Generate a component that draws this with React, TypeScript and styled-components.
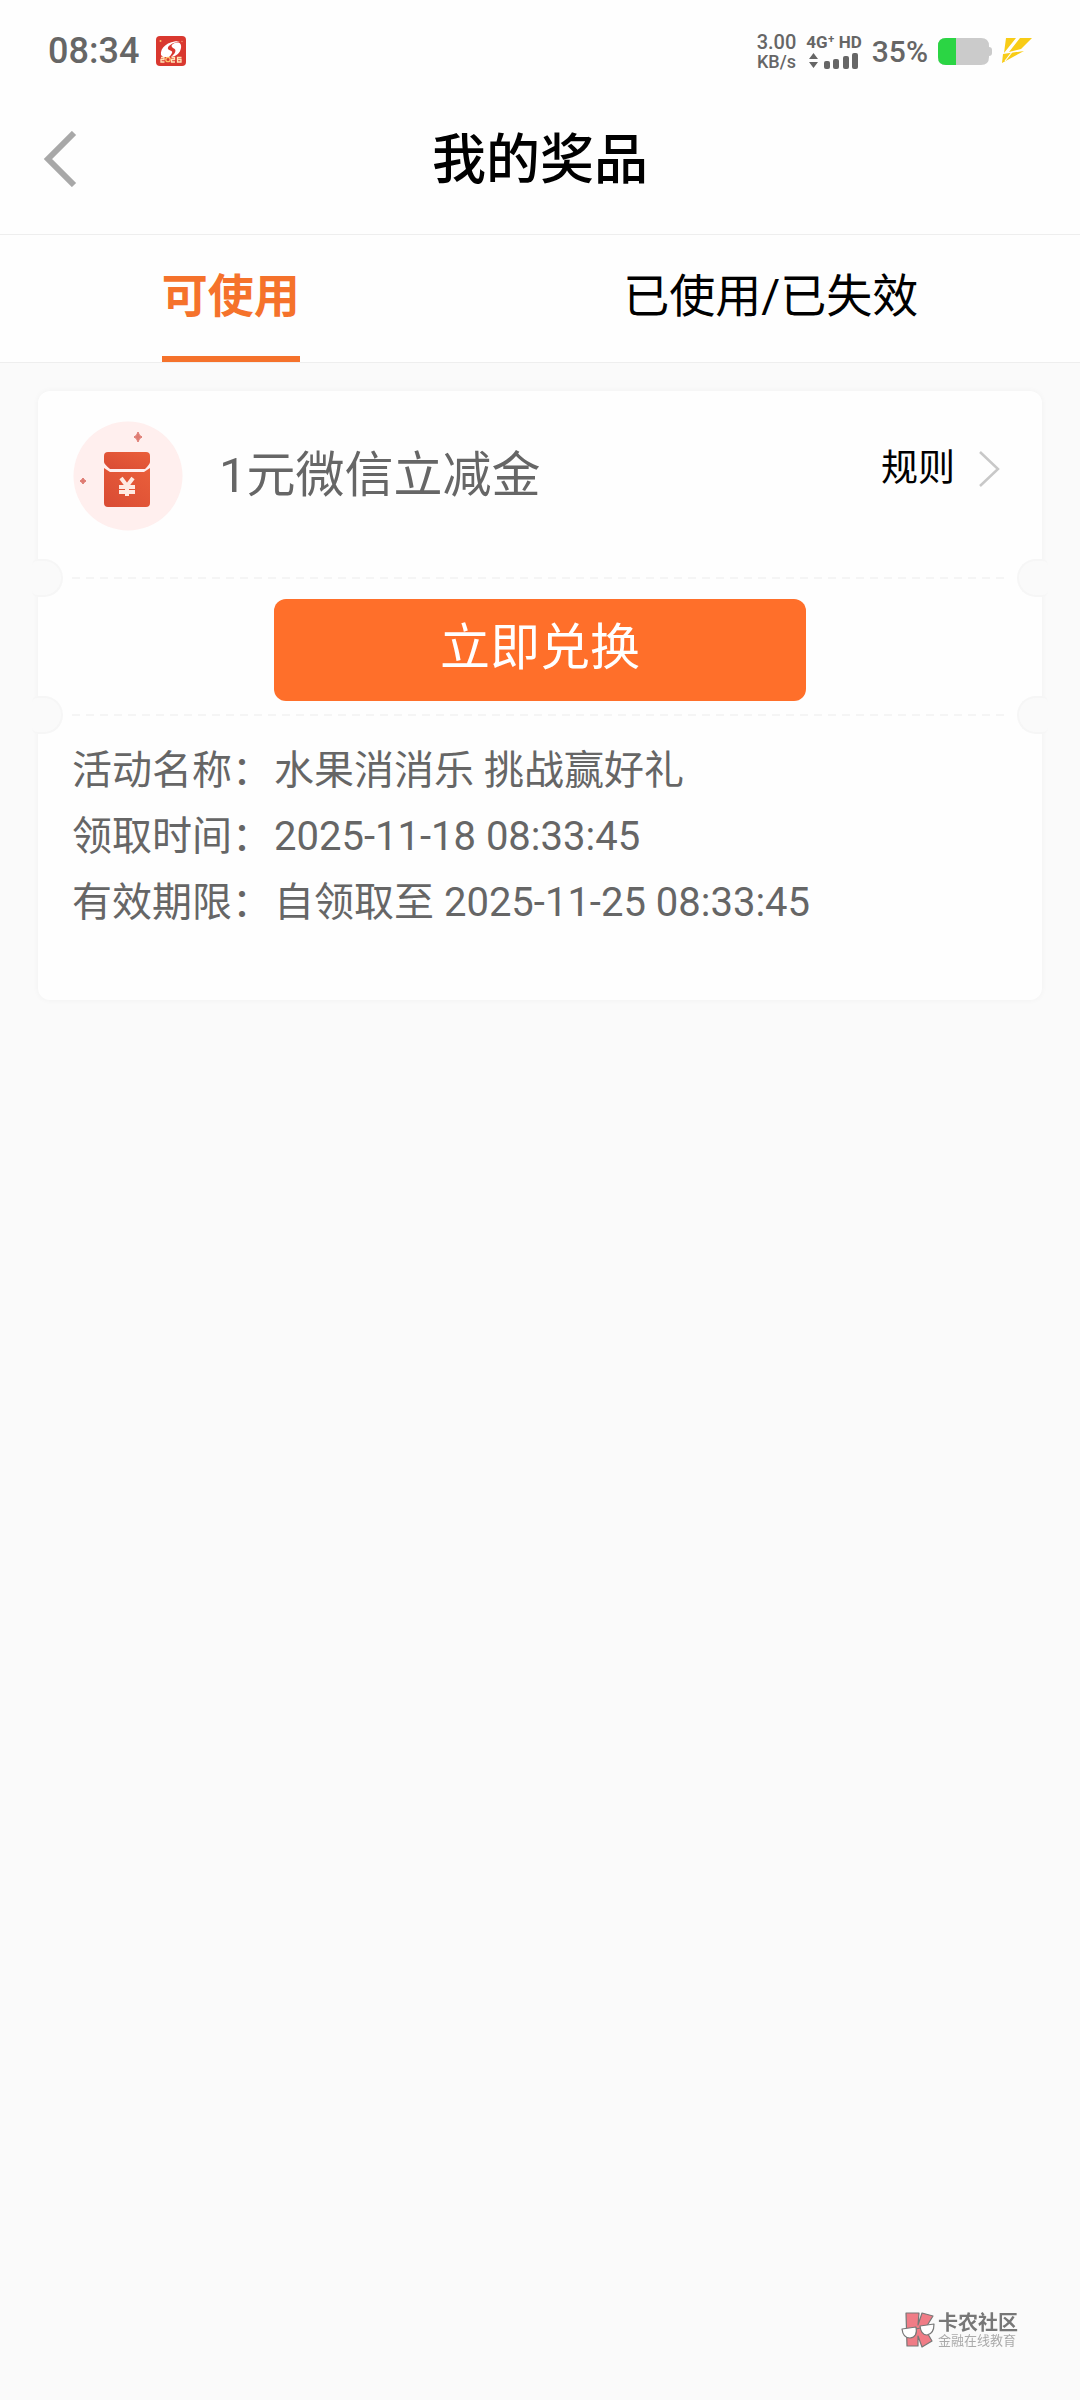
import React, { useState } from "react";
import styled, { createGlobalStyle } from "styled-components";

const GlobalStyle = createGlobalStyle`
  * { box-sizing: border-box; }
  body {
    margin: 0;
    background: #fafafa;
    color: #000;
    font-family: Roboto, "Noto Sans CJK SC", sans-serif;
  }
  button { border: 0; padding: 0; background: none; font: inherit; color: inherit; cursor: pointer; }
`;

const Page = styled.div`
  min-height: 100vh;
`;

const StatusBar = styled.div`
  display: flex;
  align-items: center;
  justify-content: space-between;
  height: 84px;
  padding: 18px 48px 0 48px;
  background: #fefefe;
  color: #666;
  font-weight: 500;
`;

const StatusGroup = styled.div<{ $gap: number }>`
  display: flex;
  align-items: center;
  gap: ${(p) => p.$gap}px;
`;

const Clock = styled.span`
  font-size: 36px;
  line-height: 36px;
`;

const Percent = styled.span`
  font-size: 30px;
  line-height: 36px;
  padding-top: 2px;
`;

const Stack = styled.div`
  display: flex;
  flex-direction: column;
  align-items: center;
  gap: 1px;
  font-size: 20px;
  line-height: 20px;
`;

const RateUnit = styled.span`
  font-size: 18px;
  line-height: 18px;
`;

const NetworkLabel = styled.span`
  font-size: 17px;
  line-height: 18px;
  font-weight: 700;
`;

const TitleBar = styled.header`
  display: grid;
  grid-template-columns: 1fr auto 1fr;
  align-items: center;
  height: 151px;
  padding: 0 40px;
  background: #fefefe;
  border-bottom: 1px solid #eee;
`;

const BackButton = styled.button`
  display: flex;
  justify-self: start;
`;

const Title = styled.h1`
  margin: 0;
  padding-top: 4px;
  font-size: 54px;
  line-height: 72px;
  font-weight: 500;
`;

const TabBar = styled.nav`
  display: flex;
  height: 128px;
  background: #fefefe;
  border-bottom: 1px solid #eee;
`;

const Tab = styled.button<{ $active: boolean }>`
  flex: 1 1 auto;
  display: flex;
  justify-content: center;
  font-size: 46px;
  font-weight: ${(p) => (p.$active ? 700 : 400)};
  color: ${(p) => (p.$active ? "#f5722b" : "#000")};
`;

const TabLabel = styled.span<{ $active: boolean }>`
  height: 127px;
  line-height: 122px;
  border-bottom: 6px solid ${(p) => (p.$active ? "#f5722b" : "transparent")};
`;

const Main = styled.main`
  padding: 28px 38px;
`;

const Card = styled.article`
  background: #fefefe;
  border-radius: 12px;
  box-shadow: 0 0 6px rgba(0, 0, 0, 0.04);
  color: #666;
`;

const CardTop = styled.div`
  display: flex;
  align-items: center;
  height: 186px;
  padding: 0 40px 16px 35px;
`;

const PrizeName = styled.h2`
  flex: 1;
  margin: 0 0 0 36px;
  font-size: 49px;
  line-height: 64px;
  font-weight: 400;
`;

const RuleButton = styled.button`
  display: flex;
  align-items: center;
  gap: 23px;
  padding-bottom: 14px;
  font-size: 37px;
  line-height: 48px;
  color: #000;
`;

const Divider = styled.div`
  position: relative;
  height: 2px;
  margin: 0 34px;
  background: repeating-linear-gradient(90deg, #f5f5f5 0 8px, transparent 8px 14px);
`;

const Notch = styled.span<{ $side: "left" | "right" }>`
  position: absolute;
  top: -18px;
  ${(p) => p.$side}: -40px;
  width: 31px;
  height: 38px;
  background: #fafafa;
  border: 2px solid #f6f6f6;
  border-${(p) => p.$side}: 0;
  border-radius: ${(p) => (p.$side === "left" ? "6px 19px 19px 6px" : "19px 6px 6px 19px")};
`;

const CardAction = styled.div`
  display: flex;
  justify-content: center;
  padding: 20px 0 13px;
`;

const RedeemButton = styled.button`
  width: 53%;
  height: 102px;
  padding-bottom: 4px;
  border-radius: 12px;
  background: #ff6f2a;
  color: #fff;
  font-size: 50px;
  line-height: 72px;
`;

const Details = styled.dl`
  margin: 0;
  padding: 22px 34px 64px;
  font-size: 40px;
  line-height: 66px;
`;

const DetailRow = styled.div`
  display: flex;
  gap: 2px;
`;

const Term = styled.dt`
  flex: none;
`;

const Value = styled.dd`
  margin: 0;
`;

const Watermark = styled.div`
  position: fixed;
  right: 62px;
  bottom: 52px;
  display: flex;
  align-items: center;
  gap: 3px;
`;

const WatermarkText = styled.div`
  display: flex;
  flex-direction: column;
  font-size: 13px;
  line-height: 14px;
  color: #aaa;
`;

const WatermarkName = styled.strong`
  font-size: 20px;
  line-height: 22px;
  font-weight: 700;
  color: #777;
`;

const AppBadge = () => (
  <svg width="30" height="30" viewBox="0 0 30 30" aria-hidden="true">
    <rect width="30" height="30" rx="4" fill="#d9382f" />
    <path d="M5 19C4 12 11 5 24 5C16 7 11 10 12 13C13 15 17 14 16 17C15 19 14 20 13 21H7Z" fill="#fff" />
    <path d="M17 8C22 5 26 7 25 12C24 17 21 20 15 21C19 18 21 14 18 12.500C15 11 15 9 17 8Z" fill="#fff" />
    <g fill="none" stroke="#ffe3b5" strokeWidth="1.3">
      <path d="M5 21.500H8V23.500H5V26H8.500M15.500 21.500H18.500V23.500H15.500V26H19M25.500 21.500H21.500V26H25V23.500H22" />
      <circle cx="12" cy="23.500" r="2.200" stroke="#ffc069" />
    </g>
    <circle cx="4.500" cy="5" r="1" fill="#ffc069" />
    <circle cx="26" cy="5.500" r="0.800" fill="#f08a6a" />
  </svg>
);

const Signal = () => (
  <svg width="50" height="18" viewBox="0 0 50 18" fill="#666" aria-hidden="true">
    <path d="M0 7L4.500 1L9 7ZM0 10L4.500 16L9 10Z" />
    <rect x="15" y="9" width="6" height="8" rx="2" />
    <rect x="24" y="7" width="6" height="10" rx="2" />
    <rect x="34" y="4" width="6" height="13" rx="2" />
    <rect x="43" y="1" width="6" height="16" rx="2" />
  </svg>
);

const Battery = () => (
  <svg width="54" height="28" viewBox="0 0 54 28" aria-hidden="true">
    <path d="M8 1H43Q51 1 51 9V10Q54 10 54 13V16Q54 19 51 19V20Q51 28 43 28H8Q0 28 0 20V9Q0 1 8 1Z" fill="#cbcbcb" />
    <path d="M18 1H8Q0 1 0 9V20Q0 28 8 28H18Z" fill="#2bd544" />
  </svg>
);

const Charging = () => (
  <svg width="30" height="26" viewBox="0 0 30 26" fill="#f8cc16" aria-hidden="true">
    <path d="M4 0H14L2 15ZM18 0H30L19 11L7 14ZM1 16L22 13L0 25Z" />
    <path d="M10 14L3 23" stroke="#fefefe" strokeWidth="1.200" />
  </svg>
);

const BackArrow = () => (
  <svg width="40" height="56" viewBox="0 0 40 56" fill="none" aria-hidden="true">
    <path d="M34 2L8 28L34 54" stroke="#a8a8a8" strokeWidth="6" />
  </svg>
);

const RuleArrow = () => (
  <svg width="24" height="38" viewBox="0 0 24 38" fill="none" aria-hidden="true">
    <path d="M2 2L20 19L2 36" stroke="#c8c8c8" strokeWidth="2.500" />
  </svg>
);

const RedPacket = () => (
  <svg width="110" height="110" viewBox="0 0 110 110" aria-hidden="true">
    <defs>
      <linearGradient id="packet" x1="0" y1="1" x2="1" y2="0">
        <stop offset="0" stopColor="#d94b34" />
        <stop offset="1" stopColor="#ea5f3a" />
      </linearGradient>
    </defs>
    <circle cx="55" cy="55" r="54.500" fill="#ffefee" />
    <path d="M31 47L37 51H71L77 47V82Q77 86 73 86H35Q31 86 31 82Z" fill="url(#packet)" />
    <path d="M35 31H73Q77 31 77 35V41Q77 43 72 48H37Q31 43 31 41V35Q31 31 35 31Z" fill="url(#packet)" />
    <path d="M48 57L54 65L60 57M46 66H62M46 71H62M54 65V75" fill="none" stroke="#ffeae2" strokeWidth="4" />
    <path d="M65 11Q66 15 69 16Q66 17 65 21Q64 17 61 16Q64 15 65 11ZM10 57Q11 59 13 60Q11 61 10 63Q9 61 7 60Q9 59 10 57Z" fill="#df7b72" stroke="#df7b72" />
  </svg>
);

const WatermarkLogo = () => (
  <svg width="34" height="36" viewBox="0 0 34 36" strokeLinejoin="round" aria-hidden="true">
    <path d="M5 1H18L17 13L21 1L32 4L24 17L31 29L21 35L17 24V34H6Z" fill="#f07c86" stroke="#777" strokeWidth="1.200" />
    <path d="M1 17L15 15Q17 25 9 26Q2 26 1 17Z" fill="#fff" stroke="#777" strokeWidth="1.200" />
    <path d="M19 14L33 12Q33 22 26 23Q20 23 19 14Z" fill="#fff" stroke="#777" strokeWidth="1.200" />
    <path d="M15 17L19 16" stroke="#777" strokeWidth="1.200" />
  </svg>
);

const TABS = ["可使用", "已使用/已失效"];

const DETAILS = [
  { term: "活动名称：", value: "水果消消乐 挑战赢好礼" },
  { term: "领取时间：", value: "2025-11-18 08:33:45" },
  { term: "有效期限：", value: "自领取至 2025-11-25 08:33:45" },
];

const TicketEdge = () => (
  <Divider>
    <Notch $side="left" />
    <Notch $side="right" />
  </Divider>
);

export default function App() {
  const [active, setActive] = useState(0);

  return (
    <Page>
      <GlobalStyle />
      <StatusBar>
        <StatusGroup $gap={17}>
          <Clock>08:34</Clock>
          <AppBadge />
        </StatusGroup>
        <StatusGroup $gap={10}>
          <Stack>
            <span>3.00</span>
            <RateUnit>KB/s</RateUnit>
          </Stack>
          <Stack>
            <NetworkLabel>4G⁺ HD</NetworkLabel>
            <Signal />
          </Stack>
          <Percent>35%</Percent>
          <Battery />
          <Charging />
        </StatusGroup>
      </StatusBar>
      <TitleBar>
        <BackButton aria-label="返回">
          <BackArrow />
        </BackButton>
        <Title>我的奖品</Title>
      </TitleBar>
      <TabBar>
        {TABS.map((label, i) => (
          <Tab key={label} $active={i === active} onClick={() => setActive(i)}>
            <TabLabel $active={i === active}>{label}</TabLabel>
          </Tab>
        ))}
      </TabBar>
      <Main>
        <Card>
          <CardTop>
            <RedPacket />
            <PrizeName>1元微信立减金</PrizeName>
            <RuleButton>
              规则
              <RuleArrow />
            </RuleButton>
          </CardTop>
          <TicketEdge />
          <CardAction>
            <RedeemButton>立即兑换</RedeemButton>
          </CardAction>
          <TicketEdge />
          <Details>
            {DETAILS.map((d) => (
              <DetailRow key={d.term}>
                <Term>{d.term}</Term>
                <Value>{d.value}</Value>
              </DetailRow>
            ))}
          </Details>
        </Card>
      </Main>
      <Watermark>
        <WatermarkLogo />
        <WatermarkText>
          <WatermarkName>卡农社区</WatermarkName>
          <span>金融在线教育</span>
        </WatermarkText>
      </Watermark>
    </Page>
  );
}
